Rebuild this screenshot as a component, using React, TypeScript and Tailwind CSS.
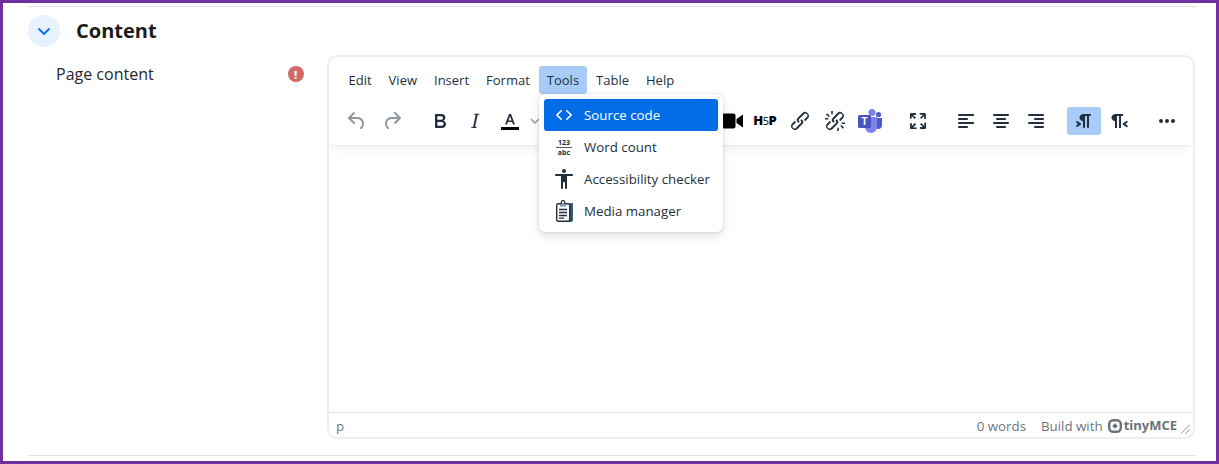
import React from 'react'

const ink = '#222f3e'

const paths: Record<string, string> = {
  undo: 'M6.4 8H12c3.7 0 6.2 2 6.8 5.1.6 2.7-.4 5.6-2.3 6.8a1 1 0 0 1-1-1.8c1.1-.6 1.8-2.7 1.4-4.6-.5-2.1-2.1-3.5-4.9-3.5H6.4l3.3 3.3a1 1 0 1 1-1.4 1.4l-5-5a1 1 0 0 1 0-1.4l5-5a1 1 0 0 1 1.4 1.4L6.4 8Z',
  redo: 'M17.6 10H12c-2.8 0-4.4 1.4-4.9 3.5-.4 2 .3 4 1.4 4.6a1 1 0 1 1-1 1.8c-2-1.2-2.9-4.1-2.3-6.8.6-3 3-5.1 6.8-5.1h5.6l-3.3-3.3a1 1 0 1 1 1.4-1.4l5 5a1 1 0 0 1 0 1.4l-5 5a1 1 0 0 1-1.4-1.4l3.3-3.3Z',
  bold: 'M7.8 19c-.3 0-.5 0-.6-.2l-.2-.5V5.7c0-.2 0-.4.2-.5l.6-.2h5c1.5 0 2.7.3 3.5 1 .7.6 1.1 1.4 1.1 2.5a3 3 0 0 1-.6 1.9c-.4.6-1 1-1.6 1.2.4.1.9.3 1.3.6s.8.7 1 1.2c.4.4.5 1 .5 1.6 0 1.3-.4 2.3-1.3 3-.8.7-2.1 1-3.8 1H7.8Zm5-8.3c.6 0 1.2-.1 1.6-.5.4-.3.6-.7.6-1.3 0-1.1-.8-1.7-2.3-1.7H9.3v3.5h3.4Zm.5 6c.7 0 1.3-.1 1.7-.4.4-.4.6-.9.6-1.5s-.2-1-.7-1.4c-.4-.3-1-.4-2-.4H9.4v3.8h4Z',
  italic: 'm16.7 4.7-.1.9h-.3c-.6 0-1 0-1.4.3-.3.3-.4.6-.5 1.1l-2.1 9.8v.6c0 .5.4.8 1.4.8h.2l-.2.8H8l.2-.8h.2c1.1 0 1.8-.5 2-1.5l2-9.8.1-.5c0-.6-.4-.8-1.4-.8h-.3l.2-.9h5.8Z',
  link: 'M6.2 12.3a1 1 0 0 1 1.4 1.4l-2 2a2 2 0 1 0 2.6 2.8l4.8-4.8a1 1 0 0 0 0-1.4 1 1 0 1 1 1.4-1.3 2.9 2.9 0 0 1 0 4L9.6 20a3.9 3.9 0 0 1-5.5-5.5l2-2Zm11.6-.6a1 1 0 0 1-1.4-1.4l2-2a2 2 0 1 0-2.6-2.8L11 10.3a1 1 0 0 0 0 1.4A1 1 0 1 1 9.6 13a2.9 2.9 0 0 1 0-4L14.4 4a3.9 3.9 0 0 1 5.5 5.5l-2 2Z',
  fullscreen: 'm15.3 10-1.2-1.3 2.9-3h-2.3a.9.9 0 1 1 0-1.7H19c.5 0 .9.4.9.9v4.4a.9.9 0 1 1-1.8 0V7l-2.9 3Zm0 4 3 3v-2.3a.9.9 0 1 1 1.7 0V19c0 .5-.4.9-.9.9h-4.4a.9.9 0 1 1 0-1.8H17l-3-2.9 1.3-1.2ZM10 15.4l-2.9 3h2.3a.9.9 0 1 1 0 1.7H5a.9.9 0 0 1-.9-.9v-4.4a.9.9 0 1 1 1.8 0V17l2.9-3 1.2 1.3ZM8.7 10 5.7 7v2.3a.9.9 0 0 1-1.7 0V5c0-.5.4-.9.9-.9h4.4a.9.9 0 0 1 0 1.8H7l3 2.9-1.3 1.2Z',
  left: 'M5 5h14c.6 0 1 .4 1 1s-.4 1-1 1H5a1 1 0 1 1 0-2Zm0 4h8c.6 0 1 .4 1 1s-.4 1-1 1H5a1 1 0 1 1 0-2Zm0 8h8c.6 0 1 .4 1 1s-.4 1-1 1H5a1 1 0 0 1 0-2Zm0-4h14c.6 0 1 .4 1 1s-.4 1-1 1H5a1 1 0 0 1 0-2Z',
  center: 'M5 5h14c.6 0 1 .4 1 1s-.4 1-1 1H5a1 1 0 1 1 0-2Zm3 4h8c.6 0 1 .4 1 1s-.4 1-1 1H8a1 1 0 1 1 0-2Zm0 8h8c.6 0 1 .4 1 1s-.4 1-1 1H8a1 1 0 0 1 0-2Zm-3-4h14c.6 0 1 .4 1 1s-.4 1-1 1H5a1 1 0 0 1 0-2Z',
  right: 'M5 5h14c.6 0 1 .4 1 1s-.4 1-1 1H5a1 1 0 1 1 0-2Zm6 4h8c.6 0 1 .4 1 1s-.4 1-1 1h-8a1 1 0 0 1 0-2Zm0 8h8c.6 0 1 .4 1 1s-.4 1-1 1h-8a1 1 0 0 1 0-2Zm-6-4h14c.6 0 1 .4 1 1s-.4 1-1 1H5a1 1 0 0 1 0-2Z',
  ltr: 'M11 5h7a1 1 0 0 1 0 2h-1v11a1 1 0 0 1-2 0V7h-2v11a1 1 0 0 1-2 0v-6c-.5 0-1 0-1.4-.3A3.4 3.4 0 0 1 7.8 10a3.3 3.3 0 0 1 0-2.8 3.4 3.4 0 0 1 1.8-1.8L11 5ZM4.4 16.2 6.2 15l-1.8-1.2a1 1 0 0 1 1.2-1.6l3 2a1 1 0 0 1 0 1.6l-3 2a1 1 0 1 1-1.2-1.6Z',
  rtl: 'M8 5h8v2h-2v12h-2V7h-2v12H8v-7c-.5 0-1 0-1.4-.3A3.4 3.4 0 0 1 4.8 10a3.3 3.3 0 0 1 0-2.8 3.4 3.4 0 0 1 1.8-1.8L8 5Zm12 11.2a1 1 0 1 1-1 1.6l-3-2a1 1 0 0 1 0-1.6l3-2a1 1 0 1 1 1 1.6L18.4 15l1.8 1.2Z',
  more: 'M6 10a2 2 0 0 0-2 2c0 1.1.9 2 2 2a2 2 0 0 0 2-2 2 2 0 0 0-2-2Zm12 0a2 2 0 0 0-2 2c0 1.1.9 2 2 2a2 2 0 0 0 2-2 2 2 0 0 0-2-2Zm-6 0a2 2 0 0 0-2 2c0 1.1.9 2 2 2a2 2 0 0 0 2-2 2 2 0 0 0-2-2Z',
  code: 'M9.8 15.7c.3.3.3.8 0 1-.3.4-.9.4-1.2 0l-4.4-4.1a.8.8 0 0 1 0-1.2l4.4-4.2c.3-.3.9-.3 1.2 0 .3.3.3.8 0 1.1L6 12l3.8 3.7ZM14.2 15.7c-.3.3-.3.8 0 1 .4.4.9.4 1.2 0l4.4-4.1c.3-.3.3-.9 0-1.2l-4.4-4.2a.8.8 0 0 0-1.2 0c-.3.3-.3.8 0 1.1L18 12l-3.8 3.7Z',
  person: 'M12 2a2 2 0 0 1 2 2 2 2 0 0 1-2 2 2 2 0 0 1-2-2c0-1.1.9-2 2-2Zm8 7h-5v12c0 .6-.4 1-1 1a1 1 0 0 1-1-1v-5c0-.6-.4-1-1-1a1 1 0 0 0-1 1v5c0 .6-.4 1-1 1a1 1 0 0 1-1-1V9H4a1 1 0 1 1 0-2h16c.6 0 1 .4 1 1s-.4 1-1 1Z',
}

const Icon = ({ name, fill = ink, opacity = 1 }: { name: string; fill?: string; opacity?: number }) => (
  <svg width="24" height="24" viewBox="0 0 24 24" fill={fill} fillOpacity={opacity}>
    <path d={paths[name]} />
  </svg>
)

const ToolButton = ({ children, className = '' }: { children: React.ReactNode; className?: string }) => (
  <div className={`flex h-7 w-[34px] shrink-0 items-center justify-center rounded-[3px] ${className}`}>{children}</div>
)

const TextColorIcon = () => (
  <svg width="24" height="24" viewBox="0 0 24 24">
    <path fill={ink} d="M7 15.500 11 5h2l4 10.500h-2l-.9-2.500H9.900L9 15.500H7Zm3.500-4h3L12 7.300l-1.500 4.200Z" />
    <path fill="#000" d="M3 18h18v3H3z" />
  </svg>
)

const VideoIcon = () => (
  <svg width="24" height="24" viewBox="0 0 24 24">
    <rect x="1" y="4.500" width="13.500" height="15" rx="2" fill="#000" />
    <path fill="#000" d="m15.500 10 6.500-4.500v13L15.500 14z" />
  </svg>
)

const UnlinkIcon = () => (
  <svg width="24" height="24" viewBox="0 0 24 24" fill={ink}>
    <path d={paths.link} />
    <path d="M3 5.500 4.200 4.300l2.600 2.600-1.200 1.200zM8.200 2h1.600v3.300H8.200zM2 9h3.300v1.600H2zM21 18.500l-1.200 1.200-2.600-2.600 1.200-1.200zM14.300 18.700h1.600V22h-1.600zM18.700 13.400H22V15h-3.300z" />
  </svg>
)

const TeamsIcon = () => (
  <svg width="26" height="26" viewBox="0 0 26 26">
    <circle cx="15" cy="4.500" r="3.500" fill="#7b83eb" />
    <circle cx="21.500" cy="6.500" r="2.600" fill="#5059c9" />
    <path fill="#5059c9" d="M17 10h8v7a4 4 0 0 1-8 0z" />
    <path fill="#7b83eb" d="M8 9h12v10a6 6 0 0 1-12 0z" />
    <rect x="1" y="7" width="13" height="13" rx="1.500" fill="#4b53bc" />
    <text x="7.500" y="17" textAnchor="middle" fontSize="10" fontWeight="700" fill="#fff" fontFamily="'Liberation Sans', sans-serif">T</text>
  </svg>
)

const ClipboardIcon = () => (
  <svg width="24" height="24" viewBox="0 0 24 24">
    <path fill="#3b5a73" d="M18 4h2a1 1 0 0 1 1 1v16a2 2 0 0 1-2 2H8v-1h9a1 1 0 0 0 1-1z" />
    <rect x="4.700" y="4.700" width="13" height="17.600" rx="1.500" fill="#fff" stroke={ink} strokeWidth="1.400" />
    <circle cx="11" cy="3.500" r="1.800" fill="#fff" stroke={ink} strokeWidth="1.200" />
    <rect x="8" y="5" width="6" height="2.500" fill="#8496a6" />
    <path stroke={ink} strokeWidth="1.300" d="M7 10.500h8M7 13.500h8M7 16.500h8M7 19.200h5" />
  </svg>
)

const MenuItem = ({ icon, label, active = false }: { icon: React.ReactNode; label: string; active?: boolean }) => (
  <div className={`flex h-8 items-center rounded-[3px] pl-2 ${active ? 'bg-[#006ce7] text-white' : 'text-[#222f3e]'}`}>
    <span className="flex w-6 shrink-0 items-center justify-center">{icon}</span>
    <span className="ml-2 whitespace-nowrap pt-[2px]">{label}</span>
  </div>
)

export default function App() {
  return (
    <div className="h-[464px] w-[1219px] overflow-hidden border-[3px] border-[#7030a0] bg-white pl-[25px] pr-[20px] pt-[3px] font-['Open_Sans',sans-serif]">
      <div className="h-px bg-[#e0e0e6]" />
      <div className="mt-2 flex h-8 items-center">
        <div className="flex size-8 items-center justify-center rounded-full bg-[#e8f1fe]">
          <svg width="16" height="16" viewBox="0 0 16 16" fill="none" stroke="#1670ff" strokeWidth="2" strokeLinecap="round" strokeLinejoin="round">
            <path d="m3 6 5 5 5-5" />
          </svg>
        </div>
        <h2 className="ml-4 text-[20px] font-bold text-[#1c1c1c]">Content</h2>
      </div>

      <div className="mt-2 flex">
        <div className="flex w-[299px] shrink-0 pl-7 pt-2">
          <span className="text-base leading-[22px] text-[#1f2933]">Page content</span>
          <div className="ml-[134px] mt-[3px] flex size-4 items-center justify-center rounded-full bg-[#d16a66] text-[11px] font-extrabold leading-none text-white">!</div>
        </div>

        <div className="relative flex h-[384px] w-[868px] flex-col rounded-[10px] border-2 border-[#eeeeee] bg-white text-[13.3px] text-[#222f3e]">
          <div className="h-[88px] shrink-0 shadow-[0_2px_2px_-2px_rgba(34,47,62,0.1),0_8px_8px_-4px_rgba(34,47,62,0.07)]">
            <div className="flex gap-px pl-[11.5px] pt-[9px] text-[13px]">
              {['Edit', 'View', 'Insert', 'Format', 'Tools', 'Table', 'Help'].map((m) => (
                <div key={m} className={`flex h-7 items-center rounded-[3px] px-2 pt-[2px] ${m === 'Tools' ? 'bg-[#a6ccf7]' : ''}`}>
                  {m}
                </div>
              ))}
            </div>
            <div className="mt-[13px] flex items-center gap-px pl-[11px]">
              <ToolButton><Icon name="undo" opacity={0.5} /></ToolButton>
              <ToolButton><Icon name="redo" opacity={0.5} /></ToolButton>
              <ToolButton className="ml-[13px]"><Icon name="bold" /></ToolButton>
              <ToolButton><Icon name="italic" /></ToolButton>
              <ToolButton><TextColorIcon /></ToolButton>
              <div className="flex h-7 w-[14px] shrink-0 items-center justify-center">
                <svg width="10" height="10" viewBox="0 0 10 10" fill="none" stroke={ink} strokeOpacity="0.5" strokeWidth="1.500"><path d="m1 3 4 4 4-4" /></svg>
              </div>
              <div className="w-[172px] shrink-0" />
              <ToolButton><VideoIcon /></ToolButton>
              <ToolButton className="-ml-[3px]">
                <span className="flex items-center text-[13px] font-extrabold text-black">
                  H<span className="mx-[-0.5px] text-[11px] font-normal">5</span>P
                </span>
              </ToolButton>
              <ToolButton><Icon name="link" /></ToolButton>
              <ToolButton><UnlinkIcon /></ToolButton>
              <ToolButton><TeamsIcon /></ToolButton>
              <ToolButton className="ml-[13px]"><Icon name="fullscreen" /></ToolButton>
              <ToolButton className="ml-[13px]"><Icon name="left" /></ToolButton>
              <ToolButton><Icon name="center" /></ToolButton>
              <ToolButton><Icon name="right" /></ToolButton>
              <ToolButton className="ml-[13px] bg-[#a6ccf7]"><Icon name="ltr" /></ToolButton>
              <ToolButton><Icon name="rtl" /></ToolButton>
              <ToolButton className="ml-[13px]"><Icon name="more" /></ToolButton>
            </div>
          </div>

          <div className="flex-1" />

          <div className="flex h-[25px] shrink-0 items-center border-t border-[#e3e3e3] pl-[7px] pr-[3px] pt-[4px] text-[rgba(34,47,62,0.7)]">
            <span>p</span>
            <span className="ml-auto">0 words</span>
            <span className="ml-[15px]">Build with</span>
            <svg className="ml-[5px] -mt-[3px]" width="14" height="14" viewBox="0 0 14 14">
              <rect x="1.200" y="1.200" width="11.600" height="11.600" rx="4" fill="none" stroke="#6b7178" strokeWidth="2.400" />
              <rect x="5" y="5" width="4" height="4" fill="#6b7178" transform="rotate(45 7 7)" />
            </svg>
            <span className="-mt-[3px] ml-[2px] text-[13px] font-bold leading-none text-[#6b7178]">tinyMCE</span>
            <svg className="ml-[3px] mt-[3px]" width="10" height="10" viewBox="0 0 10 10" fill="none" stroke="#8a9098" strokeWidth="1">
              <path d="M1 9.500 9.500 1M5.500 9.500l4-4" />
            </svg>
          </div>

          <div className="absolute left-[210px] top-[37px] w-[184px] rounded-md bg-white p-[5px] text-[13.3px] shadow-[0_0_2px_0_rgba(34,47,62,0.2),0_4px_8px_0_rgba(34,47,62,0.15)]">
            <MenuItem active icon={<Icon name="code" fill="#fff" />} label="Source code" />
            <MenuItem
              icon={
                <div className="flex w-4 flex-col items-center text-[7px] font-bold leading-[7px] text-[#222f3e]">
                  <span>123</span>
                  <div className="my-px h-px w-full bg-[#555f6b]" />
                  <span>abc</span>
                </div>
              }
              label="Word count"
            />
            <MenuItem icon={<Icon name="person" />} label="Accessibility checker" />
            <MenuItem icon={<ClipboardIcon />} label="Media manager" />
          </div>
        </div>
      </div>

      <div className="mt-[16px] h-px bg-[#e0e0e0]" />
    </div>
  )
}
